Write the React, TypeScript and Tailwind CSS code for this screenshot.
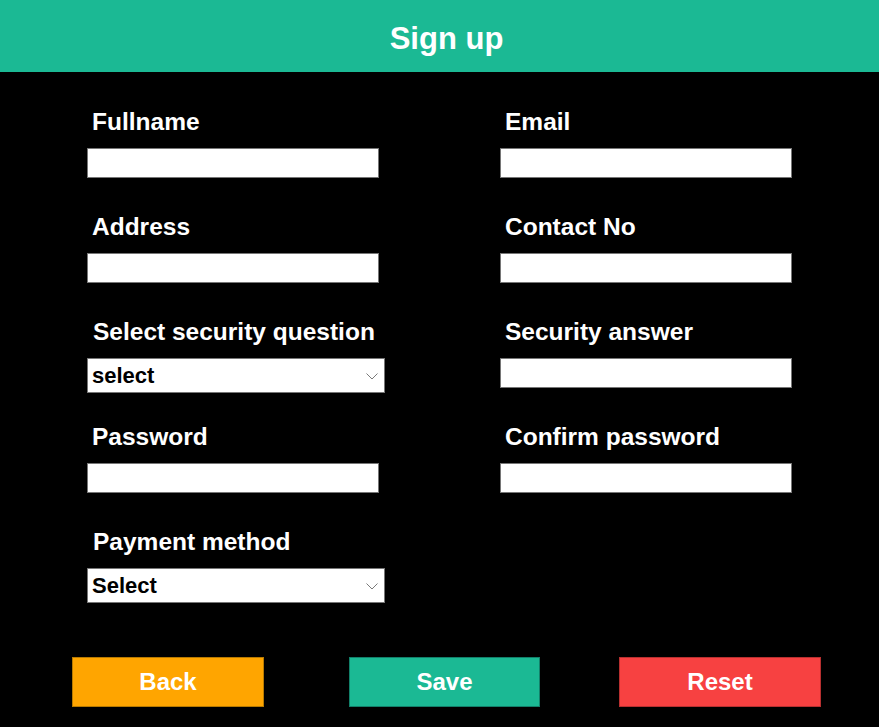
type Field = { label: string; kind: "input" | "select"; placeholder?: string };

const rows: [Field, Field | null][] = [
  [{ label: "Fullname", kind: "input" }, { label: "Email", kind: "input" }],
  [{ label: "Address", kind: "input" }, { label: "Contact No", kind: "input" }],
  [{ label: "Select security question", kind: "select", placeholder: "select" }, { label: "Security answer", kind: "input" }],
  [{ label: "Password", kind: "input" }, { label: "Confirm password", kind: "input" }],
  [{ label: "Payment method", kind: "select", placeholder: "Select" }, null],
];

const Chevron = () => (
  <svg className="pointer-events-none absolute right-[7px] top-[15px]" width="12" height="7" viewBox="0 0 12 7" fill="none">
    <path d="M0.5 0.5 L6 6 L11.5 0.5" stroke="#7a7a7a" strokeWidth="1" />
  </svg>
);

const FormField = ({ field }: { field: Field }) => (
  <div className="h-[105px]">
    <label className={`block pt-[1px] text-[24.5px] leading-[24px] font-bold text-white ${field.kind === "select" ? "pl-[6px]" : "pl-[5px]"}`}>
      {field.label}
    </label>
    {field.kind === "input" ? (
      <input type="text" className="mt-[14px] block h-[30px] w-[292px] border border-[#767676] bg-white outline-none" />
    ) : (
      <div className="relative mt-[14px] h-[35px] w-[298px]">
        <select className="block h-[35px] w-[298px] appearance-none border border-[#767676] bg-white pl-[4px] text-[22px] font-bold text-black outline-none">
          <option>{field.placeholder}</option>
        </select>
        <Chevron />
      </div>
    )}
  </div>
);

const App = () => {
  return (
    <div className="min-h-[727px] w-[879px] bg-black" style={{ fontFamily: '"Liberation Sans", Arial, sans-serif' }}>
      <header className="h-[72px] bg-[#1bb994] pl-[14px] pt-[24px] text-center text-[31px] leading-[30px] font-bold text-white">
        Sign up
      </header>

      <section className="grid grid-cols-[413px_1fr] pl-[87px] pt-[37px]">
        {rows.map(([left, right], i) => (
          <div key={i} className="contents">
            <FormField field={left} />
            {right ? <FormField field={right} /> : <div />}
          </div>
        ))}
      </section>

      <div className="mt-[23px] flex pl-[72px]">
        <button className="h-[50px] w-[192px] border border-[#b87a00] bg-[#ffa500] text-[24px] font-bold text-white">Back</button>
        <button className="ml-[85px] h-[50px] w-[191px] border border-[#12806a] bg-[#1bb994] text-[24px] font-bold text-white">Save</button>
        <button className="ml-[79px] h-[50px] w-[202px] border border-[#b83030] bg-[#f74141] text-[24px] font-bold text-white">Reset</button>
      </div>
    </div>
  );
};

export default App;
